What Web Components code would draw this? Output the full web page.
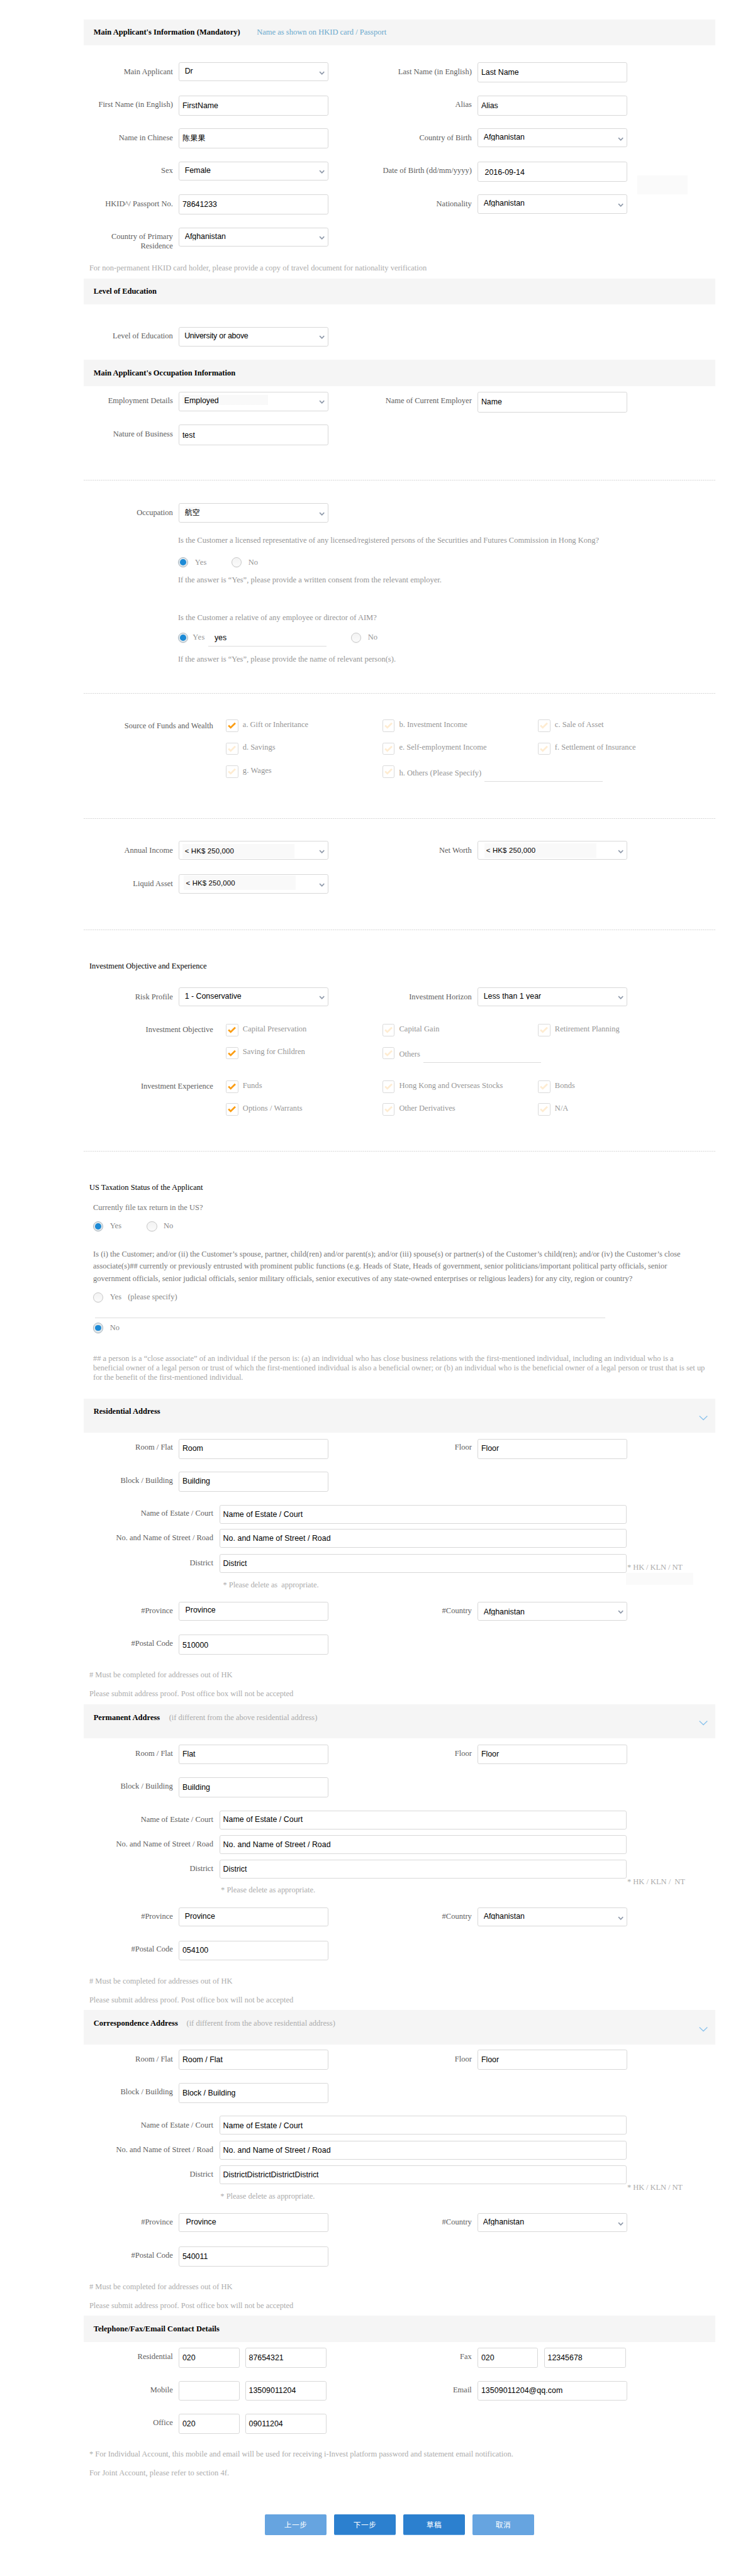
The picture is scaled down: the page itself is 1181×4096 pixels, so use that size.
<!DOCTYPE html>
<html lang="en">
<head>
<meta charset="utf-8">
<title>Account application</title>
<style>
html,body{margin:0;background:#fff}
body{font-family:"Liberation Serif","Noto Sans CJK SC",serif;color:#000}
</style>
</head>
<body>
<application-form></application-form>
<script>
const S = 1181 / 1259;
const px = n => (n * S).toFixed(3) + 'px';

class Base extends HTMLElement {
  num(k, d = 0) { const v = this.getAttribute(k); return v === null ? d : +v; }
  shadow(css, html) {
    if (!this.shadowRoot) this.attachShadow({ mode: 'open' });
    this.shadowRoot.innerHTML = `<style>${css}</style>${html}`;
  }
}

/* One line of text: b = baseline below the row top, w = width the line spans. */
customElements.define('text-line', class extends Base {
  connectedCallback() {
    const sans = this.hasAttribute('sans');
    this.shadow(`:host{display:block;white-space:pre;line-height:${px(16)};
      margin-top:${px(this.num('b', 12.5) - 11.9)};margin-left:${px(this.num('x'))};
      height:${px(this.hasAttribute('clip') ? 13.4 : 16)};${this.hasAttribute('clip') ? 'overflow:hidden;' : ''}
      font-size:${px(this.num('s', sans ? 13.2 : 13.33))};color:${this.getAttribute('c') || '#969696'};
      ${this.hasAttribute('bold') ? 'font-weight:700;' : ''}
      ${this.hasAttribute('right') ? 'text-align:right;' : ''}
      ${sans ? `font-family:${this.getAttribute('sans') || '"Liberation Sans"'},"Noto Sans CJK SC",sans-serif;` : ''}}
      span{display:inline-block}`, '<span><slot></slot></span>');
    if (this.hasAttribute('w')) {
      const el = this.shadowRoot.querySelector('span');
      const n = this.textContent.length;
      el.style.letterSpacing = ((this.num('w') * S - el.getBoundingClientRect().width) / n).toFixed(4) + 'px';
    }
  }
});

/* Grey section bar. */
customElements.define('section-bar', class extends Base {
  connectedCallback() {
    this.shadow(`:host{display:block;height:${px(this.num('h'))}}
      div{display:flex;align-items:flex-start;height:${px(this.num('bar'))};background:#f5f5f5;padding-left:${px(16.5)};box-sizing:border-box}
      svg{margin-left:auto;margin-right:${px(13)};margin-top:${px(this.num('cy') - 5)};width:${px(15)};height:${px(10)}}`,
      `<div><slot></slot>${this.hasAttribute('cy') ? '<svg viewBox="0 0 15 10" fill="none" stroke="#8cc3ec" stroke-width="1.4"><path d="M.8 1.6 7.5 8 14.2 1.6"/></svg>' : ''}</div>`);
  }
});

/* Form rows: the column template depends on the kind of row. */
const COLS = {
  pair: [[151, 254, 232.4, 254, 110], 10],
  wide: [[219.3, 690, 120], 10.7],
  check: [[219.2, 243.2, 242, 280], 21.8],
};
customElements.define('form-row', class extends Base {
  connectedCallback() {
    const k = COLS[this.getAttribute('kind')];
    this.shadow(`:host{display:${k ? 'grid' : 'flex'};align-items:start;height:${px(this.num('h'))};padding-left:${px(this.num('x'))};
      ${k ? `grid-template-columns:${k[0].map(px).join(' ')};column-gap:${px(k[1])}` : ''}}`, '<slot></slot>');
  }
});

customElements.define('form-stack', class extends Base {
  connectedCallback() { this.shadow(':host{display:block}', '<slot></slot>'); }
});

customElements.define('form-rule', class extends Base {
  connectedCallback() {
    this.shadow(`:host{display:block;height:${px(this.num('h'))}}
      div{height:1px;background:repeating-linear-gradient(90deg,#d9d9d9 0 2px,#fff 2px 3px)}`, '<div></div>');
  }
});

/* Input or select box. hl = "x y w h" of the pale fill behind the value. */
customElements.define('field-box', class extends Base {
  connectedCallback() {
    const sel = this.hasAttribute('select');
    const hl = (this.getAttribute('hl') || '').split(' ').map(Number);
    this.shadow(`:host{display:flex;align-items:flex-start;box-sizing:border-box;border:1px solid #d8d8d8;border-radius:${px(3)};
      width:${px(this.num('w', 254))};height:${px(this.num('h', 34))};margin-left:${px(this.num('ml'))};
      background:${hl.length > 1 ? `linear-gradient(#f9f9f9,#f9f9f9) ${px(hl[0])} ${px(hl[1])} / ${px(hl[2])} ${px(hl[3])} no-repeat #fff` : '#fff'}}
      svg{margin-left:auto;margin-right:${px(4)};margin-top:${px(this.num('cy', 17) - 4)};width:${px(10)};height:${px(7)};flex:none}`,
      `<slot></slot>${sel ? '<svg viewBox="0 0 10 7" fill="none" stroke="#8d98a9" stroke-width="1.8"><path d="M1.2 1.3 5 5.1 8.8 1.3"/></svg>' : ''}`);
  }
});

customElements.define('radio-dot', class extends Base {
  connectedCallback() {
    const on = this.hasAttribute('on');
    this.shadow(`:host{display:flex;align-items:center;justify-content:center;box-sizing:border-box;flex:none;width:${px(17.4)};height:${px(17.4)};
      border-radius:50%;border:1px solid ${on ? '#a9b6c0' : '#c8c8c8'};margin-left:${px(this.num('x'))};
      background:${on ? '#e1e8ec' : 'linear-gradient(#f3f3f3,#fbfbfb)'};box-shadow:0 1px 1px #0000000d}
      i{width:${px(10.4)};height:${px(10.4)};border-radius:50%;background:#1c8ad6}`, on ? '<i></i>' : '');
  }
});

customElements.define('check-item', class extends Base {
  connectedCallback() {
    this.shadow(`:host{display:flex;align-items:flex-start;gap:${px(7.4)}}
      i{flex:none;display:flex;box-sizing:border-box;width:${px(21)};height:${px(21)};border:1px solid #dadada;border-radius:${px(2.5)};background:#fff}
      svg{width:100%;height:100%}`,
      `<i><svg viewBox="0 0 19 19" fill="none" stroke="${this.hasAttribute('on') ? '#fb9d14' : '#feecd2'}" stroke-width="3"><path d="M3.4 9.2 7.2 12.8 15 5"/></svg></i><slot></slot>`);
  }
});

/* Underlined blank. */
customElements.define('blank-line', class extends Base {
  connectedCallback() {
    this.shadow(`:host{display:block;width:${px(this.num('w'))};height:1px;flex:none;background:#dcdcdc;margin-left:${px(this.num('x'))};margin-top:${px(this.num('t'))}}`, '');
  }
});

customElements.define('pale-block', class extends Base {
  connectedCallback() {
    this.shadow(`:host{display:block;width:${px(this.num('w'))};height:${px(this.num('h'))};background:#fafafa;margin-left:${px(this.num('x'))};margin-top:${px(this.num('t'))}}`, '');
  }
});

customElements.define('action-button', class extends Base {
  connectedCallback() {
    const soft = this.hasAttribute('soft');
    this.shadow(`:host{display:block;width:${px(104.6)};height:${px(35)}}
      button{all:unset;display:block;box-sizing:border-box;width:100%;height:100%;border-radius:${px(2)};text-align:center;color:#fff;
      background:${soft ? '#66a4e0' : '#2c80cf'};border-bottom:1px solid #66a4e0;
      font:${px(12.4)}/${px(32)} "Noto Sans CJK SC",sans-serif;letter-spacing:.6px}`, '<button><slot></slot></button>');
  }
});

const T = (t, a = '') => `<text-line ${a}>${t}</text-line>`;
const L = (t, b) => T(t, `right c="#5e5e5e" b="${b}"`);
const F = (t, b, a = '', o = {}) => `<field-box ${a}>${T(t, `sans c="#000" b="${b - 1}" x="${o.x ?? 5}" ${o.t || ''}`)}</field-box>`;
const SEL = (t, b, a = '', o = {}) => F(t, b, `select w="253" ${a}`, { x: 9, t: 'clip', ...o });
const C = (t, on, b, a = '') => `<check-item ${on ? 'on' : ''}>${T(t, `b="${b}" ${a}`)}</check-item>`;
const none = '<span></span>';
const row = kind => (y, ...c) => [y, h => `<form-row kind="${kind}" h="${h}">${c.join('')}</form-row>`];
const P = row('pair'), W = row('wide'), K = row('check');
const X = (y, x, ...c) => [y, h => `<form-row kind="flow" x="${x}" h="${h}">${c.join('')}</form-row>`];
const N = (base, x, t, a = '') => X(base - 12.5, x, T(t, a));
const R = y => [y, h => `<form-rule h="${h}"></form-rule>`];
const B = (y, bar, inner, cy) => [y, h => `<section-bar bar="${bar}" h="${h}" ${cy ? `cy="${cy}"` : ''}>${inner}</section-bar>`];
const H = (t, b, w) => T(t, `bold c="#000" b="${b}" w="${w}"`);
const Q = 159.6, NOTE = 9.3;
const HK = 'sans="Open Sans" w="83.5" s="12.2"';

const address = o => [
  P(o.y[0], L('Room / Flat', o.l[0]), F(o.room, o.v[0], `h="${o.fh}"`), L('Floor', o.l[0]), F('Floor', o.v[0], `h="${o.fh}"`)),
  P(o.y[1], L('Block / Building', o.l[1]), F(o.block, o.v[1], `h="${o.fh}"`)),
  W(o.y[2], L('Name of Estate / Court', o.l[2]), F('Name of Estate / Court', o.v[2], 'w="690" h="32"', { t: 'w="135"' })),
  W(o.y[3], L('No. and Name of Street / Road', o.l[3]), F('No. and Name of Street / Road', o.v[3], 'w="690" h="32"', { t: 'w="182.3"' })),
  W(o.y[4], L('District', o.l[4]), F(o.district, o.v[4], 'w="690" h="32"', { t: o.dw ? `w="${o.dw}"` : '' }),
    `<form-stack>${T(o.hk, `x="-9.8" c="#acacac" b="${o.hb}" w="${o.hw}"`)}${o.pale ? '<pale-block x="-12" t="2" w="114" h="20"></pale-block>' : ''}</form-stack>`),
  N(o.del[0], o.del[1] - 142, o.del[2], `c="#acacac" w="${o.del[3]}"`),
  P(o.y[5], L('#Province', o.l[5]), F('Province', o.v[5], 'w="253" h="32"', { x: o.px }), L('#Country', o.l[5]), SEL('Afghanistan', o.cb, `h="32" cy="17.5"`, { x: o.cx })),
  P(o.y[6], L('#Postal Code', o.l[6]), F(o.postal, o.v[6], `h="${o.fh}"`)),
  N(o.n[0], NOTE, '# Must be completed for addresses out of HK', 'c="#acacac" w="242.6"'),
  N(o.n[1], NOTE, 'Please submit address proof. Post office box will not be accepted', 'c="#acacac" w="345.8"'),
];
const phone = (y, l, a, b, ...r) => P(y, L(l, 19.7), `<form-row kind="flow" h="34">${F(a, 21.4, 'w="103"')}${F(b, 21.4, 'w="138" ml="9.7"')}</form-row>`, ...r);

const rows = [
  B(33, 44, H("Main Applicant's Information (Mandatory)", 26.3, 248.4) + T('Name as shown on HKID card / Passport', 'x="28.4" c="#6aa9cd" b="26.3" w="219.4"')),
  P(106, L('Main Applicant', 19.5), SEL('Dr', 19.3, 'h="32"', { t: '' }), L('Last Name (in English)', 19.5), F('Last Name', 21.4)),
  P(162, L('First Name (in English)', 19.5), F('FirstName', 21.4), L('Alias', 19.5), F('Alias', 21.4)),
  P(218, L('Name in Chinese', 19.5), F('陈果果', 21.2, '', { t: 's="12.6" w="39.5"' }), L('Country of Birth', 19.5), SEL('Afghanistan', 19.3, 'h="32"')),
  P(274, L('Sex', 19.5), SEL('Female', 19.3, 'h="32"', { t: '' }), L('Date of Birth (dd/mm/yyyy)', 19.5), F('2016-09-14', 23, '', { x: 11 }), '<pale-block x="7" t="23" w="85" h="33"></pale-block>'),
  P(330, L('HKID^/ Passport No.', 19.5), F('78641233', 21.4), L('Nationality', 19.5), SEL('Afghanistan', 19.3, 'h="32"')),
  P(386, `<form-stack>${L('Country of Primary', 19.5)}${L('Residence', 11.9)}</form-stack>`, SEL('Afghanistan', 19.3, 'h="32"')),
  N(459, NOTE, 'For non-permanent HKID card holder, please provide a copy of travel document for nationality verification', 'c="#acacac" w="571.7"'),
  B(472, 44, H('Level of Education', 26.3, 106.8)),
  P(554, L('Level of Education', 20), SEL('University or above', 20, 'h="33" hl="9 4.5 34 13"', { t: 'w="108"', x: 8.5 })),
  B(610, 45, H("Main Applicant's Occupation Information", 27, 240.4)),
  P(664, L('Employment Details', 20), SEL('Employed', 20, 'h="33" hl="5 5 145 17"', { t: '', x: 8 }), L('Name of Current Employer', 20), F('Name', 22, 'h="35"')),
  P(720, L('Nature of Business', 20), F('test', 22, 'h="35"')),
  R(814),
  P(853.3, L('Occupation', 20), SEL('航空', 20.6, 'h="33" cy="18" hl="9 5 26 8"', { t: 's="12.6" w="26"' })),
  N(920, Q, 'Is the Customer a licensed representative of any licensed/registered persons of the Securities and Futures Commission in Hong Kong?', 'w="713.3"'),
  X(944.6, Q, '<radio-dot on></radio-dot>', T('Yes', 'x="11.2" b="12.6" w="20"'), '<radio-dot x="42.3"></radio-dot>', T('No', 'x="11" b="12.6"')),
  N(988, Q, 'If the answer is “Yes”, please provide a written consent from the relevant employer.', 'w="446.7"'),
  N(1052, Q, 'Is the Customer a relative of any employee or director of AIM?', 'w="336.7"'),
  X(1072.3, Q, '<radio-dot on></radio-dot>', T('Yes', 'x="7.5" b="12.7" w="21"'),
    `<form-stack>${T('yes', 'sans c="#000" x="16" b="12.8"')}<blank-line x="5.5" t="6" w="200"></blank-line></form-stack>`,
    '<radio-dot x="42"></radio-dot>', T('No', 'x="11" b="12.7"')),
  N(1122, Q, 'If the answer is “Yes”, please provide the name of relevant person(s).', 'w="369"'),
  R(1175.3),
  K(1220, L('Source of Funds and Wealth', 14.5), C('a. Gift or Inheritance', 1, 12.5, 'w="111"'), C('b. Investment Income', 0, 12.5, 'w="115.5"'), C('c. Sale of Asset', 0, 12.5, 'w="82.8"')),
  K(1259, none, C('d. Savings', 0, 12.5, 'w="55"'), C('e. Self-employment Income', 0, 12.5, 'w="148.2"'), C('f. Settlement of Insurance', 0, 12.5, 'w="137.3"')),
  K(1298, none, C('g. Wages', 0, 12.5, 'w="49"'), `<form-row kind="flow">${C('h. Others (Please Specify)', 0, 17, 'w="139.5"')}<blank-line x="5.5" t="26" w="200"></blank-line></form-row>`),
  R(1387.3),
  P(1426, L('Annual Income', 20), SEL('&lt; HK$ 250,000', 20.8, 'h="32" cy="17.5" hl="5 3.5 190 25"', { t: HK }), L('Net Worth', 20), SEL('&lt; HK$ 250,000', 20, 'h="32" cy="17.5" hl="10 2.5 190 25"', { t: HK, x: 13.5 })),
  P(1482.3, L('Liquid Asset', 20), SEL('&lt; HK$ 250,000', 18.8, 'h="32.6" cy="17.5" hl="7.5 1 190 25"', { t: HK, x: 11 })),
  R(1576.3),
  N(1642.3, NOTE, 'Investment Objective and Experience', 'c="#000" w="199"'),
  P(1674, L('Risk Profile', 20), SEL('1 - Conservative', 19.2, 'h="32"', { t: '' }), L('Investment Horizon', 20), SEL('Less than 1 year', 19.2, 'h="32"')),
  K(1736, L('Investment Objective', 13.7), C('Capital Preservation', 1, 12.5, 'w="108.2"'), C('Capital Gain', 0, 12.5, 'w="68.3"'), C('Retirement Planning', 0, 12.5, 'w="109.7"')),
  K(1775, none, C('Saving for Children', 1, 12.5, 'w="105.3"'), `<form-row kind="flow">${C('Others', 0, 16.3, 'w="35.6"')}<blank-line x="6" t="26" w="199"></blank-line></form-row>`),
  K(1832, L('Investment Experience', 13.7), C('Funds', 1, 12.5, 'w="32.7"'), C('Hong Kong and Overseas Stocks', 0, 12.5, 'w="175.8"'), C('Bonds', 0, 12.5, 'w="34.1"')),
  K(1870, none, C('Options / Warrants', 1, 12.8, 'w="101"'), C('Other Derivatives', 0, 12.8, 'w="95.2"'), C('N/A', 0, 12.8)),
  R(1951),
  N(2017, NOTE, 'US Taxation Status of the Applicant', 'c="#000" w="192.5"'),
  N(2052, 15.8, 'Currently file tax return in the US?', 'c="#777" w="186"'),
  X(2070.3, 15.8, '<radio-dot on></radio-dot>', T('Yes', 'x="11" b="12.7" w="20" c="#888"'), '<radio-dot x="42.6"></radio-dot>', T('No', 'x="11" b="12.7" c="#888"')),
  N(2130, 15.8, 'Is (i) the Customer; and/or (ii) the Customer’s spouse, partner, child(ren) and/or parent(s); and/or (iii) spouse(s) or partner(s) of the Customer’s child(ren); and/or (iv) the Customer’s close', 'c="#777" w="995.2"'),
  N(2151, 15.8, 'associate(s)## currently or previously entrusted with prominent public functions (e.g. Heads of State, Heads of government, senior politicians/important political party officials, senior', 'c="#777" w="972.7"'),
  N(2172, 15.8, 'government officials, senior judicial officials, senior military officials, senior executives of any state-owned enterprises or religious leaders) for any city, region or country?', 'c="#777" w="913.8"'),
  X(2190.6, 15.8, '<radio-dot></radio-dot>', T('Yes', 'x="11" b="12.7" w="20" c="#888"'), T('(please specify)', 'x="10.5" b="12.7" w="83.5" c="#888"')),
  X(2234, 18.7, '<blank-line w="864.5"></blank-line>'),
  X(2242.6, 15.8, '<radio-dot on></radio-dot>', T('No', 'x="11" b="12.7" c="#888"')),
  N(2307.3, 15.8, '## a person is a “close associate” of an individual if the person is: (a) an individual who has close business relations with the first-mentioned individual, including an individual who is a', 'c="#a8a8a8" w="983.6"'),
  N(2323.3, 15.8, 'beneficial owner of a legal person or trust of which the first-mentioned individual is also a beneficial owner; or (b) an individual who is the beneficial owner of a legal person or trust that is set up', 'c="#a8a8a8" w="1036.6"'),
  N(2339.3, 15.8, 'for the benefit of the first-mentioned individual.', 'c="#a8a8a8" w="254.2"'),
  B(2371, 57.6, H('Residential Address', 26.2, 113), 33),
  ...address({ y: [2439.3, 2495.4, 2551.4, 2592.5, 2634.3, 2715.4, 2771.4], l: [18.8, 18.8, 18.8, 19.3, 19.3, 19.6, 19.4], v: [20.4, 20.4, 20, 20.4, 20.4, 18.8, 21.8],
    fh: 34, room: 'Room', block: 'Building', district: 'District', hk: '* HK / KLN / NT', hb: 26.7, hw: 93.7, pale: 1,
    del: [2691, 378, '* Please delete as  appropriate.', 162], px: 10, cb: 22, cx: 9, postal: '510000', n: [2844.3, 2876] }),
  B(2889, 58, H('Permanent Address', 27, 112.6) + T('(if different from the above residential address)', 'x="15.3" c="#acacac" b="27" w="251.3"'), 32.5),
  ...address({ y: [2957.3, 3013.3, 3069.3, 3111.3, 3153.3, 3234.3, 3290.3], l: [19.4, 19.4, 19.6, 19.6, 18.8, 18.8, 18.8], v: [20.8, 20.8, 20, 20, 20, 18.6, 20.8],
    fh: 33.6, room: 'Flat', block: 'Building', district: 'District', hk: '* HK / KLN /  NT', hb: 41.7, hw: 98,
    del: [3209, 374.3, '* Please delete as appropriate.', 159.8], px: 9, cb: 18.6, cx: 9, postal: '054100', n: [3363, 3395] }),
  B(3408, 58, H('Correspondence Address', 26.3, 143) + T('(if different from the above residential address)', 'x="14.6" c="#acacac" b="26.3" w="252"'), 32.5),
  ...address({ y: [3475.3, 3531.3, 3587.3, 3629.3, 3671.3, 3752.3, 3808.3], l: [19.7, 19.7, 19.7, 19.7, 19.4, 19.4, 19.4], v: [21.4, 21.4, 21, 21, 20, 19.4, 21.4],
    fh: 34, room: 'Room / Flat', block: 'Block / Building', district: 'DistrictDistrictDistrictDistrict', dw: 162, hk: '* HK / KLN / NT', hb: 41.7, hw: 93.7,
    del: [3728, 373.5, '* Please delete as appropriate.', 159.8], px: 11, cb: 19.4, cx: 8, postal: '540011', n: [3881, 3913] }),
  B(3926, 45, H('Telephone/Fax/Email Contact Details', 27, 213.6)),
  phone(3980.3, 'Residential', '020', '87654321', L('Fax', 19.7), `<form-row kind="flow" h="34">${F('020', 21.4, 'w="102.5"')}${F('12345678', 21.4, 'w="138.5" ml="10.2"')}</form-row>`),
  phone(4036.3, 'Mobile', '', '13509011204', L('Email', 19.7), F('13509011204@qq.com', 21.4, '', { t: 'w="138"' })),
  phone(4092.3, 'Office', '020', '09011204'),
  N(4165, NOTE, '* For Individual Account, this mobile and email will be used for receiving i-Invest platform password and statement email notification.', 'c="#acacac" w="718.4"'),
  N(4197, NOTE, 'For Joint Account, please refer to section 4f.', 'c="#acacac" w="236.8"'),
  X(4263, 307, ['<action-button soft>上一步', '<action-button>下一步', '<action-button>草稿', '<action-button soft>取消'].join('</action-button><form-gap></form-gap>') + '</action-button>'),
];

customElements.define('form-gap', class extends Base {
  connectedCallback() { this.shadow(`:host{display:block;width:${px(12.6)};flex:none}`, ''); }
});

customElements.define('application-form', class extends Base {
  connectedCallback() {
    this.shadow(`:host{display:block;box-sizing:border-box;width:1181px;height:4096px;overflow:hidden;padding:${px(33)} ${px(47)} 0 ${px(142)}}`,
      rows.map(([y, make], i) => make(+((rows[i + 1]?.[0] ?? 4366) - y).toFixed(3))).join(''));
  }
});
</script>
</body>
</html>
